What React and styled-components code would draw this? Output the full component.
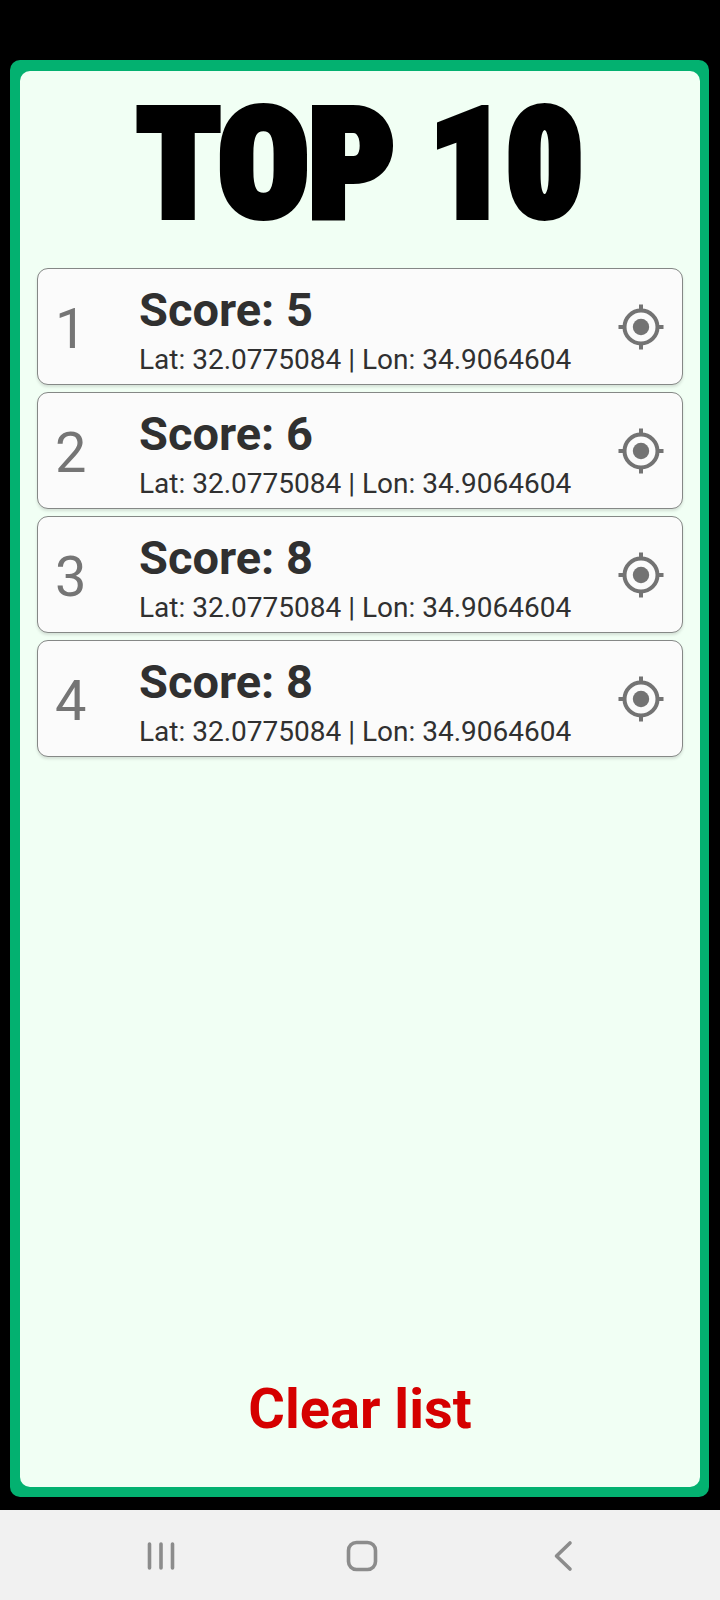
import React, { useState } from "react";
import styled, { createGlobalStyle } from "styled-components";

const GlobalStyle = createGlobalStyle`
  * { box-sizing: border-box; }
  body {
    margin: 0;
    background: #000;
    font-family: Roboto, "Liberation Sans", sans-serif;
  }
  button {
    border: 0;
    padding: 0;
    background: none;
    font: inherit;
    cursor: pointer;
  }
`;

const Screen = styled.div`
  min-height: 100vh;
  display: flex;
  flex-direction: column;
  background: #000;
`;

const Frame = styled.main`
  flex: 1;
  display: flex;
  margin: 60px 11px 13px 10px;
  padding: 11px 9px 10px 10px;
  border-radius: 10px;
  background: #03b170;
`;

const Board = styled.div`
  flex: 1;
  min-width: 0;
  display: flex;
  flex-direction: column;
  padding: 0 17px 28px;
  border-radius: 10px;
  background: #f1fff4;
`;

const Title = styled.h1`
  margin: 0;
  height: 197px;
  padding-top: 4px;
  text-align: center;
  white-space: nowrap;
  color: #000;
  font-family: "Roboto Condensed", Roboto, sans-serif;
  font-size: 150px;
  line-height: 180px;
  font-weight: 900;
  -webkit-text-stroke: 8px #000;
`;

const ScoreList = styled.ol`
  flex: 1;
  display: flex;
  flex-direction: column;
  gap: 7px;
  margin: 0;
  padding: 0;
  list-style: none;
`;

const ScoreCard = styled.li`
  display: flex;
  align-items: center;
  height: 117px;
  padding: 0 18px 0 17px;
  border: 1px solid #858886;
  border-radius: 11px;
  background: #fbfbfb;
  box-shadow: 0 2px 3px rgba(0, 0, 0, 0.12);
`;

const Rank = styled.span`
  width: 84px;
  padding-top: 4px;
  color: #757575;
  font-size: 56px;
  line-height: 64px;
`;

const Details = styled.div`
  flex: 1;
  min-width: 0;
  padding-top: 6px;
  color: #303030;
  white-space: nowrap;
`;

const Score = styled.div`
  font-size: 47px;
  line-height: 56px;
  font-weight: 700;
`;

const Position = styled.div`
  padding-top: 4px;
  font-size: 28px;
  line-height: 36px;
`;

const LocateButton = styled.button`
  display: flex;
  color: #737373;
`;

const ClearButton = styled.button`
  align-self: center;
  color: #d50000;
  font-size: 56px;
  line-height: 100px;
  font-weight: 700;
`;

const NavBar = styled.nav`
  display: grid;
  grid-template-columns: repeat(3, 1fr);
  height: 90px;
  padding: 2px 56px 0 60px;
  background: #f1f1f1;
`;

const NavButton = styled.button`
  display: flex;
  align-items: center;
  justify-content: center;
  color: #8c8c8c;
`;

const scores = [
  { score: 5, lat: "32.0775084", lon: "34.9064604" },
  { score: 6, lat: "32.0775084", lon: "34.9064604" },
  { score: 8, lat: "32.0775084", lon: "34.9064604" },
  { score: 8, lat: "32.0775084", lon: "34.9064604" },
];

const LocateIcon = () => (
  <svg width="46" height="46" viewBox="0 0 46 46" fill="none" stroke="currentColor" strokeWidth="4" aria-hidden="true">
    <circle cx="23" cy="23" r="16.5" />
    <circle cx="23" cy="23" r="8.2" fill="currentColor" stroke="none" />
    <path d="M23 .5V6M23 40v5.500M.5 23H6M40 23h5.500" />
  </svg>
);

const NavIcon = ({ children }) => (
  <svg
    width="32"
    height="32"
    viewBox="0 0 32 32"
    fill="none"
    stroke="currentColor"
    strokeWidth="3.6"
    strokeLinecap="round"
    strokeLinejoin="round"
    aria-hidden="true"
  >
    {children}
  </svg>
);

export default function App() {
  const [entries, setEntries] = useState(scores);

  return (
    <Screen>
      <GlobalStyle />
      <Frame>
        <Board>
          <Title>TOP 10</Title>
          <ScoreList>
            {entries.map((entry, index) => (
              <ScoreCard key={index}>
                <Rank>{index + 1}</Rank>
                <Details>
                  <Score>Score: {entry.score}</Score>
                  <Position>
                    Lat: {entry.lat} | Lon: {entry.lon}
                  </Position>
                </Details>
                <LocateButton type="button" aria-label={`Show score ${index + 1} on the map`}>
                  <LocateIcon />
                </LocateButton>
              </ScoreCard>
            ))}
          </ScoreList>
          <ClearButton type="button" onClick={() => setEntries([])}>
            Clear list
          </ClearButton>
        </Board>
      </Frame>
      <NavBar aria-label="System navigation">
        <NavButton type="button" aria-label="Recent apps">
          <NavIcon>
            <path d="M4.500 4v24M16 4v24M27.500 4v24" />
          </NavIcon>
        </NavButton>
        <NavButton type="button" aria-label="Home">
          <NavIcon>
            <rect x="2.500" y="2.500" width="27" height="27" rx="8" />
          </NavIcon>
        </NavButton>
        <NavButton type="button" aria-label="Back">
          <NavIcon>
            <path d="M23 3L9.500 16 23 29" />
          </NavIcon>
        </NavButton>
      </NavBar>
    </Screen>
  );
}
